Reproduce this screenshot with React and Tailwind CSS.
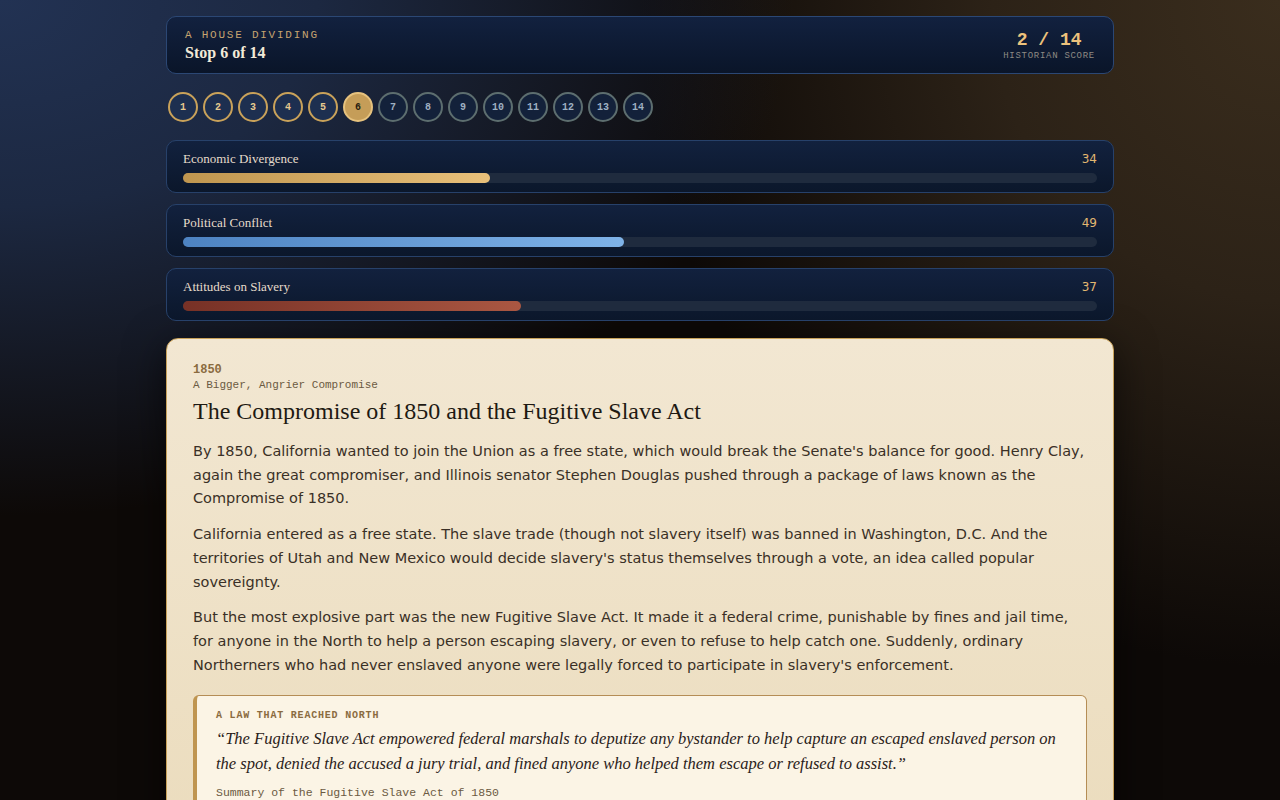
import React from "react";

const stops = Array.from({ length: 14 }, (_, i) => i + 1);
const current = 6;

const meters = [
   { label: "Economic Divergence", value: 34, width: 33.6, bar: "bg-gradient-to-r from-[#bf964f] to-[#e8c07a]" },
   { label: "Political Conflict", value: 49, width: 48.2, bar: "bg-gradient-to-r from-[#4d83c2] to-[#7fb3e8]" },
   { label: "Attitudes on Slavery", value: 37, width: 37, bar: "bg-gradient-to-r from-[#773126] to-[#aa5742]" },
];

const mono = "font-['Liberation_Mono',monospace]";
const serif = "font-['Liberation_Serif',serif]";

const Meter = ({ label, value, width, bar }) => (
   <div className="h-[53px] rounded-[10px] border border-[#27416a] bg-gradient-to-b from-[#12213e] to-[#0b172b] px-4 pt-[10px]">
      <div className="flex h-4 items-center justify-between">
         <span className={`${serif} text-[13px] leading-4 text-[#e6dccb]`}>{label}</span>
         <span className="font-['DejaVu_Sans',sans-serif] text-[12px] leading-4 text-[#e2b771]">{value}</span>
      </div>
      <div className="mt-[6px] h-[10px] rounded-full bg-[#1f2b3e]">
         <div className={`h-full rounded-full ${bar}`} style={{ width: `${width}%` }} />
      </div>
   </div>
);

const StopDot = ({ n }) => {
   let cls = "border-[#5d6e6f] bg-[#13213a] text-[#9fb0c2]";
   if (n < current) cls = "border-[#c9a25a] bg-[#1d2f50] text-[#e6c98f]";
   if (n === current) cls = "border-[#e6c27e] bg-[#c59d58] text-[#2a1f10]";
   return (
      <div className={`flex h-[30px] w-[30px] items-center justify-center rounded-full border-2 ${mono} text-[10px] font-bold ${cls}`}>
         {n}
      </div>
   );
};

export default function App() {
   return (
      <div className="min-h-screen bg-[#0d0907] bg-[radial-gradient(ellipse_62%_58%_at_0%_0%,#223253_0%,#1c2841_40%,transparent_100%),radial-gradient(ellipse_50%_75%_at_100%_0%,#3a2d1d_0%,#2c2217_45%,transparent_100%)] pt-4 pb-10">
         <div className="mx-auto max-w-[948px]">
            {/* header */}
            <div className="flex h-[58px] items-center justify-between rounded-[10px] border border-[#2b4774] bg-gradient-to-b from-[#12213f] to-[#0a1529] px-[18px]">
               <div className="pt-[3px]">
                  <div className={`${mono} text-[11px] leading-none tracking-[0.16em] text-[#c7a470]`}>A HOUSE DIVIDING</div>
                  <div className={`${serif} mt-[2px] text-[16px] font-bold leading-tight text-[#f3ead8]`}>Stop 6 of 14</div>
               </div>
               <div className="flex flex-col items-center pt-[2px]">
                  <div className={`${mono} text-[18px] font-bold leading-none text-[#ecc27c]`}>2 / 14</div>
                  <div className={`${mono} mt-[3px] text-[9px] leading-none tracking-[0.08em] text-[#8d8a84]`}>HISTORIAN SCORE</div>
               </div>
            </div>

            {/* stops */}
            <div className="mt-[18px] flex gap-[5px] pl-[2px]">
               {stops.map((n) => (
                  <StopDot key={n} n={n} />
               ))}
            </div>

            {/* meters */}
            <div className="mt-[18px] flex flex-col gap-[11px]">
               {meters.map((m) => (
                  <Meter key={m.label} {...m} />
               ))}
            </div>

            {/* story card */}
            <div className="mt-[17px] rounded-[12px] border border-[#c9a25a] bg-gradient-to-b from-[#f2e7d2] to-[#ebdcbd] px-[26px] pt-[25px] pb-8 shadow-[0_10px_40px_rgba(0,0,0,0.6)]">
               <div className={`${mono} text-[12px] font-bold leading-none text-[#8a6b3f]`}>1850</div>
               <div className={`${mono} mt-[4px] text-[11px] leading-none text-[#6b5a42]`}>A Bigger, Angrier Compromise</div>
               <h1 className={`${serif} mt-[5px] text-[24px] leading-tight text-[#1e1912]`}>
                  The Compromise of 1850 and the Fugitive Slave Act
               </h1>
               <div className="mt-[14px] flex flex-col gap-3 font-['DejaVu_Sans',sans-serif] text-[14.5px] leading-[23.7px] text-[#3a3026]">
                  <p>
                     By 1850, California wanted to join the Union as a free state, which would break the Senate's balance for good. Henry Clay,
                     again the great compromiser, and Illinois senator Stephen Douglas pushed through a package of laws known as the
                     Compromise of 1850.
                  </p>
                  <p>
                     California entered as a free state. The slave trade (though not slavery itself) was banned in Washington, D.C. And the
                     territories of Utah and New Mexico would decide slavery's status themselves through a vote, an idea called popular
                     sovereignty.
                  </p>
                  <p>
                     But the most explosive part was the new Fugitive Slave Act. It made it a federal crime, punishable by fines and jail time,
                     for anyone in the North to help a person escaping slavery, or even to refuse to help catch one. Suddenly, ordinary
                     Northerners who had never enslaved anyone were legally forced to participate in slavery's enforcement.
                  </p>
               </div>

               <div className="mt-[18px] rounded-[6px] border border-[#b58d55] border-l-4 border-l-[#bf9550] bg-[#fbf4e5] pt-[15px] pr-5 pb-4 pl-[19px]">
                  <div className={`${mono} text-[10px] font-bold leading-none tracking-[0.08em] text-[#8a6b3f]`}>A LAW THAT REACHED NORTH</div>
                  <p className={`${serif} mt-[5px] text-[16.5px] italic leading-[25px] text-[#2a2119]`}>
                     “The Fugitive Slave Act empowered federal marshals to deputize any bystander to help capture an escaped enslaved person on
                     the spot, denied the accused a jury trial, and fined anyone who helped them escape or refused to assist.”
                  </p>
                  <div className={`${mono} mt-[11px] text-[11.5px] leading-none text-[#6b5a42]`}>Summary of the Fugitive Slave Act of 1850</div>
               </div>
            </div>
         </div>
      </div>
   );
}
